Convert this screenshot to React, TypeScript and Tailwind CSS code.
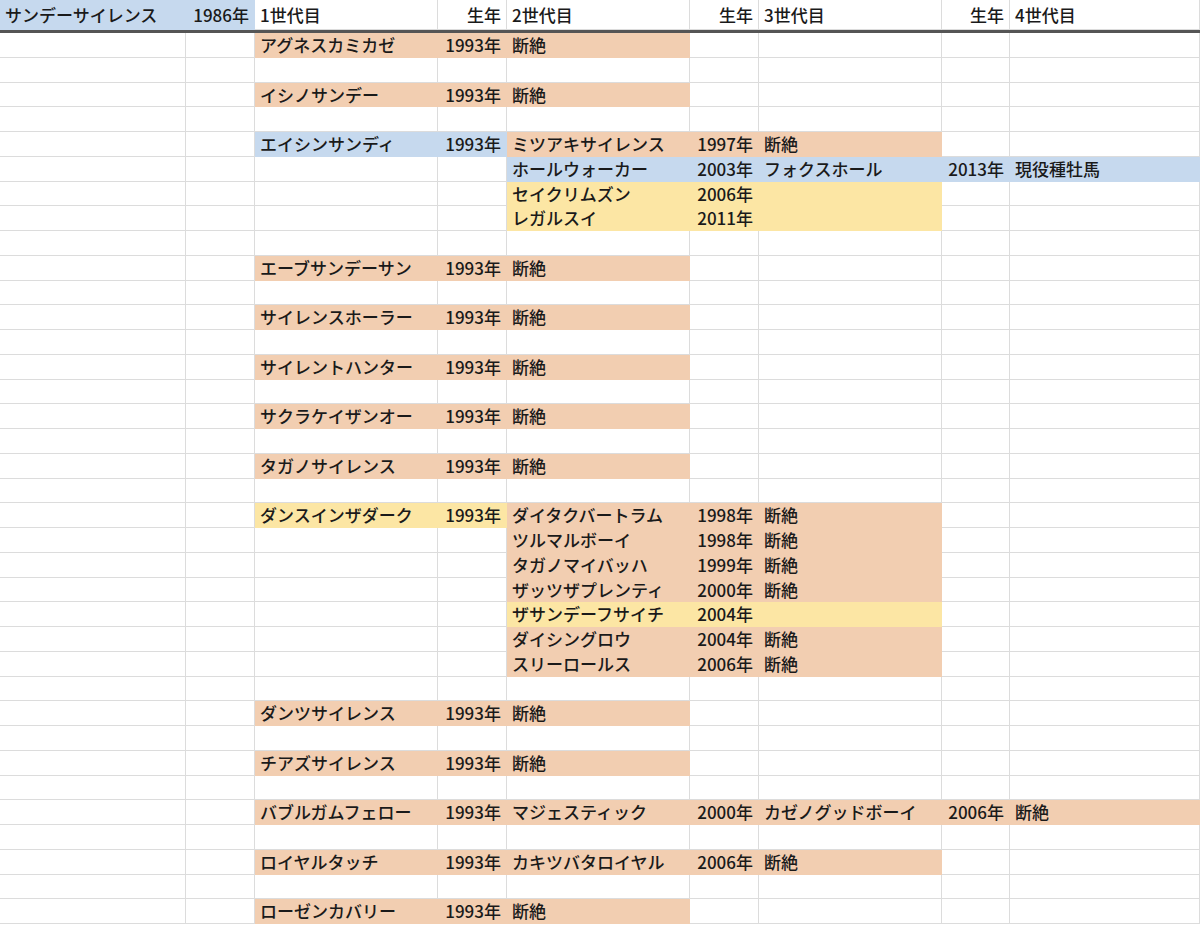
const W = ['w-[186px]', 'w-[69px]', 'w-[183px]', 'w-[69px]', 'w-[183px]', 'w-[69px]', 'w-[183px]', 'w-[68px]', 'w-[190px]'];
const RIGHT = [1, 3, 5, 7];

type Row = { t?: Record<number, string>; spans?: [number, number, string][] };

const P = 'peach';
const B = 'blue';
const Y = 'yellow';

const BG: Record<string, string> = {
  peach: 'bg-[#f2ceb1] border-[#f2ceb1]',
  blue: 'bg-[#c6d9ee] border-[#c6d9ee]',
  yellow: 'bg-[#fce6a4] border-[#fce6a4]',
};

const single = (name: string): Row => ({ t: { 2: name, 3: '1993年', 4: '断絶' }, spans: [[2, 4, P]] });
const blank: Row = {};

const rows: Row[] = [
  single('アグネスカミカゼ'), blank,
  single('イシノサンデー'), blank,
  { t: { 2: 'エイシンサンディ', 3: '1993年', 4: 'ミツアキサイレンス', 5: '1997年', 6: '断絶' }, spans: [[2, 3, B], [4, 6, P]] },
  { t: { 4: 'ホールウォーカー', 5: '2003年', 6: 'フォクスホール', 7: '2013年', 8: '現役種牡馬' }, spans: [[4, 8, B]] },
  { t: { 4: 'セイクリムズン', 5: '2006年' }, spans: [[4, 6, Y]] },
  { t: { 4: 'レガルスイ', 5: '2011年' }, spans: [[4, 6, Y]] },
  blank,
  single('エーブサンデーサン'), blank,
  single('サイレンスホーラー'), blank,
  single('サイレントハンター'), blank,
  single('サクラケイザンオー'), blank,
  single('タガノサイレンス'), blank,
  { t: { 2: 'ダンスインザダーク', 3: '1993年', 4: 'ダイタクバートラム', 5: '1998年', 6: '断絶' }, spans: [[2, 3, Y], [4, 6, P]] },
  { t: { 4: 'ツルマルボーイ', 5: '1998年', 6: '断絶' }, spans: [[4, 6, P]] },
  { t: { 4: 'タガノマイバッハ', 5: '1999年', 6: '断絶' }, spans: [[4, 6, P]] },
  { t: { 4: 'ザッツザプレンティ', 5: '2000年', 6: '断絶' }, spans: [[4, 6, P]] },
  { t: { 4: 'ザサンデーフサイチ', 5: '2004年' }, spans: [[4, 6, Y]] },
  { t: { 4: 'ダイシングロウ', 5: '2004年', 6: '断絶' }, spans: [[4, 6, P]] },
  { t: { 4: 'スリーロールス', 5: '2006年', 6: '断絶' }, spans: [[4, 6, P]] },
  blank,
  single('ダンツサイレンス'), blank,
  single('チアズサイレンス'), blank,
  { t: { 2: 'バブルガムフェロー', 3: '1993年', 4: 'マジェスティック', 5: '2000年', 6: 'カゼノグッドボーイ', 7: '2006年', 8: '断絶' }, spans: [[2, 8, P]] },
  blank,
  { t: { 2: 'ロイヤルタッチ', 3: '1993年', 4: 'カキツバタロイヤル', 5: '2006年', 6: '断絶' }, spans: [[2, 6, P]] },
  blank,
  single('ローゼンカバリー'),
];

function colorOf(row: Row, c: number) {
  for (const [a, b, col] of row.spans ?? []) if (c >= a && c <= b) return col;
  return null;
}

function Cell({ i, text, color, h }: { i: number; text?: string; color?: string | null; h: string }) {
  const style = color ? BG[color] : 'bg-white border-[#dcdcdc]';
  return (
    <div
      className={`${W[i]} ${h} ${style} shrink-0 border-r border-b flex items-center px-[5px] overflow-hidden whitespace-nowrap ${
        RIGHT.includes(i) ? 'justify-end' : ''
      }`}
    >
      {text}
    </div>
  );
}

export default function App() {
  const header = ['サンデーサイレンス', '1986年', '1世代目', '生年', '2世代目', '生年', '3世代目', '生年', '4世代目'];
  return (
    <div
      className="w-[1200px] h-[928px] overflow-hidden bg-white text-[17px] font-medium text-[#1a1a1a]"
      style={{ fontFamily: '"Noto Sans CJK JP", "Noto Sans", sans-serif' }}
    >
      <div className="flex border-b-[3px] border-[#555]">
        {header.map((t, i) => (
          <Cell key={i} i={i} text={t} color={i < 2 ? B : null} h="h-[30px]" />
        ))}
      </div>
      {rows.map((r, ri) => (
        <div key={ri} className="flex">
          {W.map((_, i) => (
            <Cell key={i} i={i} text={r.t?.[i]} color={colorOf(r, i)} h="h-[24.75px]" />
          ))}
        </div>
      ))}
    </div>
  );
}
